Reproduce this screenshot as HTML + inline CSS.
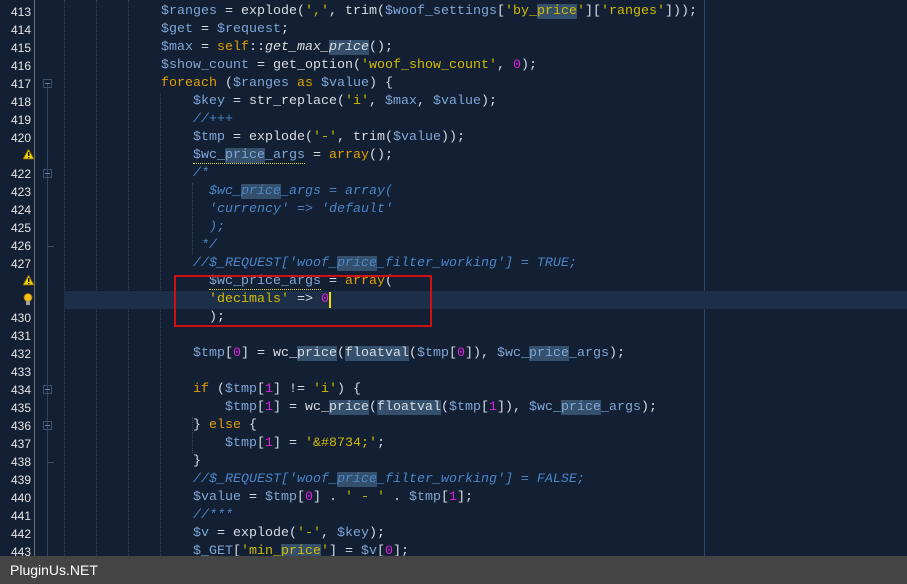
<!DOCTYPE html>
<html><head><meta charset="utf-8"><style>
html,body{margin:0;padding:0}
body{width:907px;height:584px;background:#131f33;position:relative;overflow:hidden;font-family:"Liberation Mono",monospace;font-size:13.33px}
.ln{position:absolute;left:0;width:31px;text-align:right;color:#e6e6e6;font-family:"Liberation Sans",sans-serif;font-size:12px;height:18px;line-height:18px}
.c{position:absolute;height:18px;line-height:18px;white-space:pre;color:#d8dce4;letter-spacing:0}
.v{color:#7fa6d6}.k{color:#e0a000}.s{color:#d0bc00}.n{color:#e020e0}.cm{color:#4a86c8;font-style:italic}
.h{background:#34506c}
.w{border-bottom:1px dotted #e8e000}
.guide{position:absolute;top:0;height:556px;width:0;border-left:1px dotted #2c4466}
.fold{position:absolute;left:43px;width:9px;height:9px;border:1px solid #3a5070;box-sizing:border-box}
.fold:after{content:"";position:absolute;left:1px;top:3px;width:5px;height:1px;background:#6a80a0}
</style></head><body>
<div style="position:absolute;left:34px;top:0;width:1px;height:556px;background:#6a6f78"></div>
<div style="position:absolute;left:47px;top:84px;width:1px;height:472px;background:#2f4565"></div>
<div style="position:absolute;left:704px;top:0;width:1px;height:556px;background:#2a4a70"></div>
<div class="guide" style="left:64px"></div>
<div class="guide" style="left:96px"></div>
<div class="guide" style="left:128px"></div>
<div class="guide" style="left:160px;top:93px;height:463px"></div>
<div class="guide" style="left:192px;top:183px;height:72px"></div>
<div class="guide" style="left:192px;top:417px;height:36px"></div>
<div style="position:absolute;left:64px;top:291px;width:843px;height:18px;background:#1d2f48"></div>
<div class="fold" style="top:79px"></div>
<div class="fold" style="top:169px"></div>
<div style="position:absolute;left:48px;top:246px;width:6px;height:1px;background:#3a5070"></div>
<div style="position:absolute;left:48px;top:462px;width:6px;height:1px;background:#3a5070"></div>
<div class="fold" style="top:385px"></div>
<div class="fold" style="top:421px"></div>

<div class="ln" style="top:3px">413</div><div class="ln" style="top:21px">414</div><div class="ln" style="top:39px">415</div><div class="ln" style="top:57px">416</div><div class="ln" style="top:75px">417</div><div class="ln" style="top:93px">418</div><div class="ln" style="top:111px">419</div><div class="ln" style="top:129px">420</div>
<svg style="position:absolute;left:23px;top:149px" width="11" height="11"><polygon points="5.5,0 11,10 0,10" fill="#f0d000" stroke="#806000" stroke-width="0.8"/><rect x="5" y="3" width="1.4" height="4" fill="#000"/><rect x="5" y="8" width="1.4" height="1.2" fill="#000"/></svg>
<div class="ln" style="top:165px">422</div><div class="ln" style="top:183px">423</div><div class="ln" style="top:201px">424</div><div class="ln" style="top:219px">425</div><div class="ln" style="top:237px">426</div><div class="ln" style="top:255px">427</div>
<svg style="position:absolute;left:23px;top:275px" width="11" height="11"><polygon points="5.5,0 11,10 0,10" fill="#f0d000" stroke="#806000" stroke-width="0.8"/><rect x="5" y="3" width="1.4" height="4" fill="#000"/><rect x="5" y="8" width="1.4" height="1.2" fill="#000"/></svg>
<svg style="position:absolute;left:23px;top:293px" width="10" height="13"><circle cx="5" cy="4.5" r="4" fill="#f0c020" stroke="#a07000" stroke-width="0.8"/><rect x="3" y="8" width="4" height="4" fill="#a0a0a0"/></svg>
<div class="ln" style="top:309px">430</div><div class="ln" style="top:327px">431</div><div class="ln" style="top:345px">432</div><div class="ln" style="top:363px">433</div><div class="ln" style="top:381px">434</div><div class="ln" style="top:399px">435</div><div class="ln" style="top:417px">436</div><div class="ln" style="top:435px">437</div><div class="ln" style="top:453px">438</div><div class="ln" style="top:471px">439</div><div class="ln" style="top:489px">440</div><div class="ln" style="top:507px">441</div><div class="ln" style="top:525px">442</div><div class="ln" style="top:543px">443</div>

<div class="c" style="top:3px;left:161px"><span class="v">$ranges</span> = explode(<span class="s">','</span>, trim(<span class="v">$woof_settings</span>[<span class="s">'by_<span class="h">price</span>'</span>][<span class="s">'ranges'</span>]));</div>
<div class="c" style="top:21px;left:161px"><span class="v">$get</span> = <span class="v">$request</span>;</div>
<div class="c" style="top:39px;left:161px"><span class="v">$max</span> = <span class="k">self</span>::<i>get_max_<span class="h">price</span></i>();</div>
<div class="c" style="top:57px;left:161px"><span class="v">$show_count</span> = get_option(<span class="s">'woof_show_count'</span>, <span class="n">0</span>);</div>
<div class="c" style="top:75px;left:161px"><span class="k">foreach</span> (<span class="v">$ranges</span> <span class="k">as</span> <span class="v">$value</span>) {</div>
<div class="c" style="top:93px;left:193px"><span class="v">$key</span> = str_replace(<span class="s">'i'</span>, <span class="v">$max</span>, <span class="v">$value</span>);</div>
<div class="c cm" style="top:111px;left:193px">//+++</div>
<div class="c" style="top:129px;left:193px"><span class="v">$tmp</span> = explode(<span class="s">'-'</span>, trim(<span class="v">$value</span>));</div>
<div class="c" style="top:147px;left:193px"><span class="v w">$wc_<span class="h">price</span>_args</span> = <span class="k">array</span>();</div>
<div class="c cm" style="top:165px;left:193px">/*</div>
<div class="c cm" style="top:183px;left:209px">$wc_<span class="h">price</span>_args = array(</div>
<div class="c cm" style="top:201px;left:209px">'currency' =&gt; 'default'</div>
<div class="c cm" style="top:219px;left:209px">);</div>
<div class="c cm" style="top:237px;left:201px">*/</div>
<div class="c cm" style="top:255px;left:193px">//$_REQUEST['woof_<span class="h">price</span>_filter_working'] = TRUE;</div>
<div class="c" style="top:273px;left:209px"><span class="v w">$wc_price_args</span> = <span class="k">array</span>(</div>
<div class="c" style="top:291px;left:209px"><span class="s">'decimals'</span> =&gt; <span class="n">0</span></div>
<div style="position:absolute;left:329px;top:292px;width:2px;height:16px;background:#f0e000"></div>
<div class="c" style="top:309px;left:209px">);</div>
<div style="position:absolute;left:174px;top:275px;width:254px;height:48px;border:2px solid #d01010"></div>
<div class="c" style="top:345px;left:193px"><span class="v">$tmp</span>[<span class="n">0</span>] = wc_<span class="h">price</span>(<span class="h">floatval</span>(<span class="v">$tmp</span>[<span class="n">0</span>]), <span class="v">$wc_<span class="h">price</span>_args</span>);</div>
<div class="c" style="top:381px;left:193px"><span class="k">if</span> (<span class="v">$tmp</span>[<span class="n">1</span>] != <span class="s">'i'</span>) {</div>
<div class="c" style="top:399px;left:225px"><span class="v">$tmp</span>[<span class="n">1</span>] = wc_<span class="h">price</span>(<span class="h">floatval</span>(<span class="v">$tmp</span>[<span class="n">1</span>]), <span class="v">$wc_<span class="h">price</span>_args</span>);</div>
<div class="c" style="top:417px;left:193px">} <span class="k">else</span> {</div>
<div class="c" style="top:435px;left:225px"><span class="v">$tmp</span>[<span class="n">1</span>] = <span class="s">'&amp;#8734;'</span>;</div>
<div class="c" style="top:453px;left:193px">}</div>
<div class="c cm" style="top:471px;left:193px">//$_REQUEST['woof_<span class="h">price</span>_filter_working'] = FALSE;</div>
<div class="c" style="top:489px;left:193px"><span class="v">$value</span> = <span class="v">$tmp</span>[<span class="n">0</span>] . <span class="s">' - '</span> . <span class="v">$tmp</span>[<span class="n">1</span>];</div>
<div class="c cm" style="top:507px;left:193px">//***</div>
<div class="c" style="top:525px;left:193px"><span class="v">$v</span> = explode(<span class="s">'-'</span>, <span class="v">$key</span>);</div>
<div class="c" style="top:543px;left:193px"><span class="v">$_GET</span>[<span class="s">'min_<span class="h">price</span>'</span>] = <span class="v">$v</span>[<span class="n">0</span>];</div>

<div style="position:absolute;left:0;top:556px;width:907px;height:28px;background:#444444;color:#fff;font-family:'Liberation Sans',sans-serif;font-size:14px;line-height:28px;padding-left:10px;box-sizing:border-box">PluginUs.NET</div>
</body></html>
